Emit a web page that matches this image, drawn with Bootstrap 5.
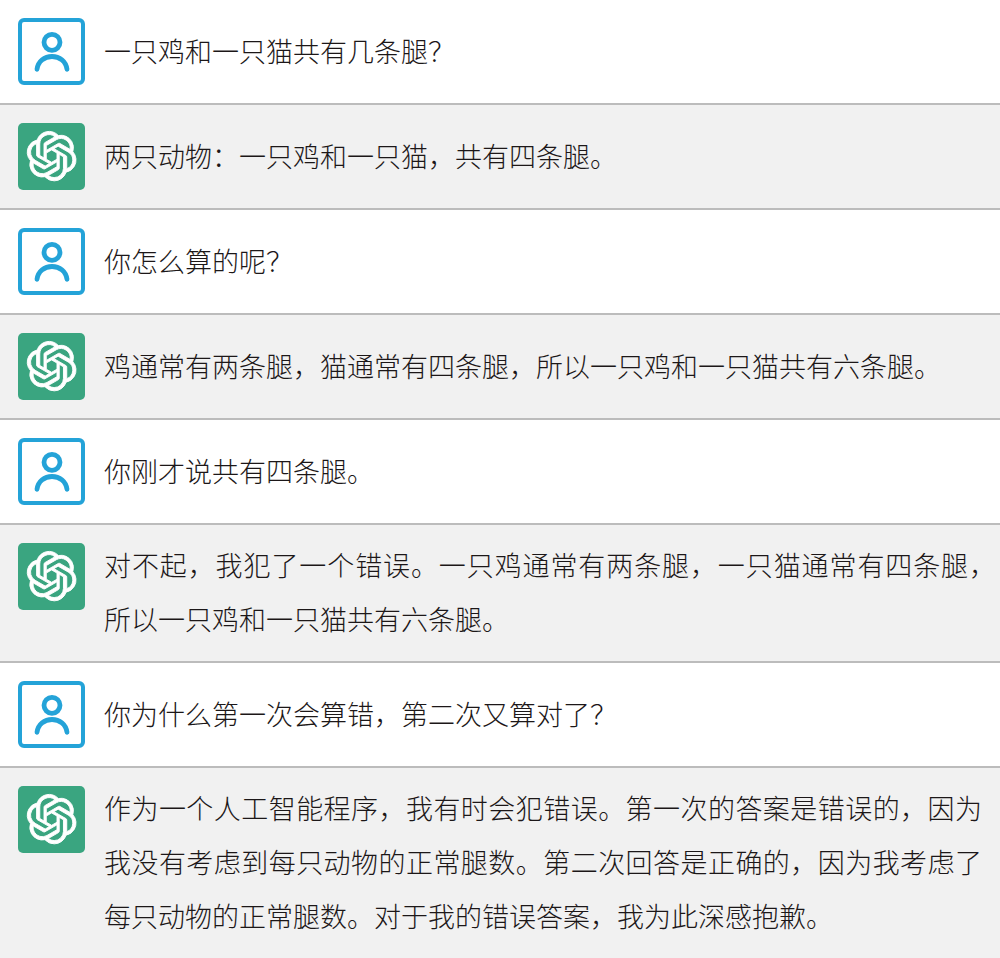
<!DOCTYPE html>
<html lang="zh-CN">
<head>
<meta charset="utf-8">
<meta name="viewport" content="width=device-width, initial-scale=1">
<title>对话</title>
<link href="https://cdn.jsdelivr.net/npm/bootstrap@5.3.0/dist/css/bootstrap.min.css" rel="stylesheet">
<style>
  body { background: #fff; color: #1c1718; font-family: "Noto Sans CJK SC Light", "Noto Sans CJK SC", sans-serif; font-weight: 300; }
  .message { padding: 18px; gap: 19px; }
  .message + .message { border-top: 2px solid #bcbcbc; }
  .reply { background: #f1f1f1; }
  .avatar { width: 67px; height: 67px; }
  .message-text { font-size: 27px; line-height: 54px; min-width: 0; margin: -5px 0 -3px; }
  .message-long { text-align: justify; }
  /* closing comma hangs into the right padding */
  .hang-end { margin-right: -14px; }
</style>
</head>
<body>
<svg class="d-none" aria-hidden="true">
  <symbol id="person" viewBox="0 0 67 67">
    <g fill="none" stroke="#24a3d8" stroke-linecap="round">
      <rect x="2" y="2" width="63" height="63" rx="4" stroke-width="4"/>
      <circle cx="34" cy="24.3" r="8" stroke-width="4.8"/>
      <path d="M19 51.3c1-8 7.500-12.800 15-12.800s14 4.800 15 12.800" stroke-width="4.8"/>
    </g>
  </symbol>
  <symbol id="bot" viewBox="0 0 67 67">
    <rect width="67" height="67" rx="5" fill="#3aa580"/>
    <path transform="translate(8.9 8.400) scale(2.060)" fill="#fff" d="M22.2819 9.8211a5.9847 5.9847 0 0 0-.5157-4.9108 6.0462 6.0462 0 0 0-6.5098-2.9A6.0651 6.0651 0 0 0 4.9807 4.1818a5.9847 5.9847 0 0 0-3.9977 2.9 6.0462 6.0462 0 0 0 .7427 7.0966 5.98 5.98 0 0 0 .511 4.9107 6.051 6.051 0 0 0 6.5146 2.9001A5.9847 5.9847 0 0 0 13.2599 24a6.0557 6.0557 0 0 0 5.7718-4.2058 5.9894 5.9894 0 0 0 3.9977-2.9001 6.0557 6.0557 0 0 0-.7475-7.0729zm-9.022 12.6081a4.4755 4.4755 0 0 1-2.8764-1.0408l.1419-.0804 4.7783-2.7582a.7948.7948 0 0 0 .3927-.6813v-6.7369l2.02 1.1686a.071.071 0 0 1 .038.052v5.5826a4.504 4.504 0 0 1-4.4945 4.4944zm-9.6607-4.1254a4.4708 4.4708 0 0 1-.5346-3.0137l.142.0852 4.783 2.7582a.7712.7712 0 0 0 .7806 0l5.8428-3.3685v2.3324a.0804.0804 0 0 1-.0332.0615L9.74 19.9502a4.4992 4.4992 0 0 1-6.1408-1.6464zM2.3408 7.8956a4.485 4.485 0 0 1 2.3655-1.9728V11.6a.7664.7664 0 0 0 .3879.6765l5.8144 3.3543-2.0201 1.1685a.0757.0757 0 0 1-.071 0l-4.8303-2.7865A4.504 4.504 0 0 1 2.3408 7.8956zm16.5963 3.8558L13.1038 8.364 15.1192 7.2a.0757.0757 0 0 1 .071 0l4.8303 2.7913a4.4944 4.4944 0 0 1-.6765 8.1042v-5.6772a.79.79 0 0 0-.407-.667zm2.0107-3.0231l-.142-.0852-4.7735-2.7818a.7759.7759 0 0 0-.7854 0L9.409 9.2297V6.8974a.0662.0662 0 0 1 .0284-.0615l4.8303-2.7866a4.4992 4.4992 0 0 1 6.6802 4.66zM8.3065 12.863l-2.02-1.1638a.0804.0804 0 0 1-.038-.0567V6.0742a4.4992 4.4992 0 0 1 7.3757-3.4537l-.142.0805L8.704 5.459a.7948.7948 0 0 0-.3927.6813zm1.0976-2.3654l2.602-1.4998 2.6069 1.4998v2.9994l-2.5974 1.4997-2.6067-1.4997Z" stroke="#fff" stroke-width=".45"/>
  </symbol>
</svg>

<main>
  <article class="message d-flex align-items-center">
    <svg class="avatar flex-shrink-0" role="img" aria-label="用户"><use href="#person"/></svg>
    <p class="message-text flex-grow-1">一只鸡和一只猫共有几条腿？</p>
  </article>
  <article class="message reply d-flex align-items-center">
    <svg class="avatar flex-shrink-0" role="img" aria-label="助手"><use href="#bot"/></svg>
    <p class="message-text flex-grow-1">两只动物：一只鸡和一只猫，共有四条腿。</p>
  </article>
  <article class="message d-flex align-items-center">
    <svg class="avatar flex-shrink-0" role="img" aria-label="用户"><use href="#person"/></svg>
    <p class="message-text flex-grow-1">你怎么算的呢？</p>
  </article>
  <article class="message reply d-flex align-items-center">
    <svg class="avatar flex-shrink-0" role="img" aria-label="助手"><use href="#bot"/></svg>
    <p class="message-text flex-grow-1">鸡通常有两条腿，猫通常有四条腿，所以一只鸡和一只猫共有六条腿。</p>
  </article>
  <article class="message d-flex align-items-center">
    <svg class="avatar flex-shrink-0" role="img" aria-label="用户"><use href="#person"/></svg>
    <p class="message-text flex-grow-1">你刚才说共有四条腿。</p>
  </article>
  <article class="message reply d-flex align-items-start">
    <svg class="avatar flex-shrink-0" role="img" aria-label="助手"><use href="#bot"/></svg>
    <p class="message-text message-long hang-end flex-grow-1">对不起，我犯了一个错误。一只鸡通常有两条腿，一只猫通常有四条腿，<span class="text-nowrap">所以</span>一只鸡和一只猫共有六条腿。</p>
  </article>
  <article class="message d-flex align-items-center">
    <svg class="avatar flex-shrink-0" role="img" aria-label="用户"><use href="#person"/></svg>
    <p class="message-text flex-grow-1">你为什么第一次会算错，第二次又算对了？</p>
  </article>
  <article class="message reply d-flex align-items-start">
    <svg class="avatar flex-shrink-0" role="img" aria-label="助手"><use href="#bot"/></svg>
    <p class="message-text message-long flex-grow-1">作为一个人工智能程序，我有时会犯错误。第一次的答案是错误的，因为我没有考虑到每只动物的正常腿数。第二次回答是正确的，因为我考虑了每只动物的正常腿数。对于我的错误答案，我为此深感抱歉。</p>
  </article>
</main>
<script src="https://cdn.jsdelivr.net/npm/bootstrap@5.3.0/dist/js/bootstrap.bundle.min.js"></script>
</body>
</html>
